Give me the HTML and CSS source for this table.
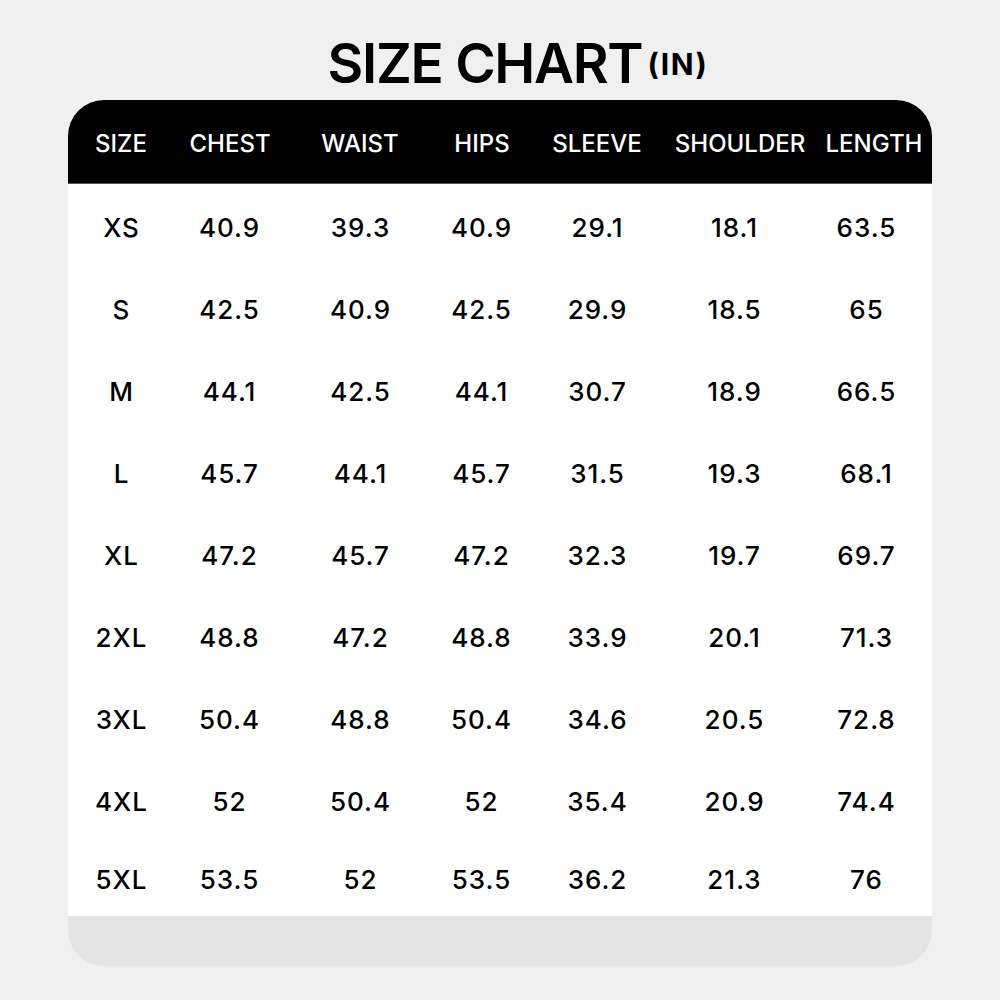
FILE: index.html
```html
<!DOCTYPE html>
<html>
<head>
<meta charset="utf-8">
<link rel="stylesheet" href="styles.css">
</head>
<body>
<div class="page">
  <h1 class="title">SIZE CHART<span class="unit">(IN)</span></h1>
  <div class="card">
    <div class="head">
      <div>SIZE</div><div>CHEST</div><div>WAIST</div><div>HIPS</div><div>SLEEVE</div><div>SHOULDER</div><div>LENGTH</div>
    </div>
    <div class="body">
      <div class="row"><div>XS</div><div>40.9</div><div>39.3</div><div>40.9</div><div>29.1</div><div>18.1</div><div>63.5</div></div>
      <div class="row"><div>S</div><div>42.5</div><div>40.9</div><div>42.5</div><div>29.9</div><div>18.5</div><div>65</div></div>
      <div class="row"><div>M</div><div>44.1</div><div>42.5</div><div>44.1</div><div>30.7</div><div>18.9</div><div>66.5</div></div>
      <div class="row"><div>L</div><div>45.7</div><div>44.1</div><div>45.7</div><div>31.5</div><div>19.3</div><div>68.1</div></div>
      <div class="row"><div>XL</div><div>47.2</div><div>45.7</div><div>47.2</div><div>32.3</div><div>19.7</div><div>69.7</div></div>
      <div class="row"><div>2XL</div><div>48.8</div><div>47.2</div><div>48.8</div><div>33.9</div><div>20.1</div><div>71.3</div></div>
      <div class="row"><div>3XL</div><div>50.4</div><div>48.8</div><div>50.4</div><div>34.6</div><div>20.5</div><div>72.8</div></div>
      <div class="row"><div>4XL</div><div>52</div><div>50.4</div><div>52</div><div>35.4</div><div>20.9</div><div>74.4</div></div>
      <div class="row"><div>5XL</div><div>53.5</div><div>52</div><div>53.5</div><div>36.2</div><div>21.3</div><div>76</div></div>
    </div>
    <div class="foot"></div>
  </div>
</div>
</body>
</html>
```
FILE: styles.css
```css
html, body {
  margin: 0;
  padding: 0;
  background: #f0f0f0;
}
body {
  font-family: Inter, "Liberation Sans", sans-serif;
  color: #000;
}
.page {
  width: 1000px;
  height: 1000px;
  padding-top: 30px;
  box-sizing: border-box;
}
.title {
  margin: 0;
  height: 70px;
  display: flex;
  justify-content: center;
  align-items: flex-start;
  font-size: 55px;
  font-weight: 600;
  line-height: 66px;
  letter-spacing: -1.3px;
  padding-left: 36px;
}
.unit {
  font-size: 30px;
  line-height: 34px;
  margin-top: 17px;
  margin-left: 5px;
  font-weight: 700;
  letter-spacing: 1.5px;
}
.card {
  margin: 0 68px;
  width: 864px;
}
.head {
  background: #000;
  color: #fff;
  height: 84px;
  border-radius: 36px 36px 0 0;
  display: grid;
  grid-template-columns: 106px 112px 148px 96px 134px 152px 116px;
  align-items: center;
  font-size: 24px;
  font-weight: 500;
  text-align: center;
  padding-top: 3px;
  box-sizing: border-box;
  border-bottom: 1px solid #555;
}
.body {
  background: #fff;
  height: 732px;
  display: grid;
  grid-template-rows: repeat(8, 82px) 1fr;
  padding-top: 2px;
  box-sizing: border-box;
}
.row {
  display: grid;
  grid-template-columns: 106px 110px 152px 90px 142px 132px 132px;
  align-items: center;
  text-align: center;
  font-size: 26px;
  font-weight: 500;
  letter-spacing: 1px;
}
.row > div {
  padding-left: 1px;
}
.foot {
  background: #e4e4e4;
  height: 50px;
  border-radius: 0 0 36px 36px;
}
```
